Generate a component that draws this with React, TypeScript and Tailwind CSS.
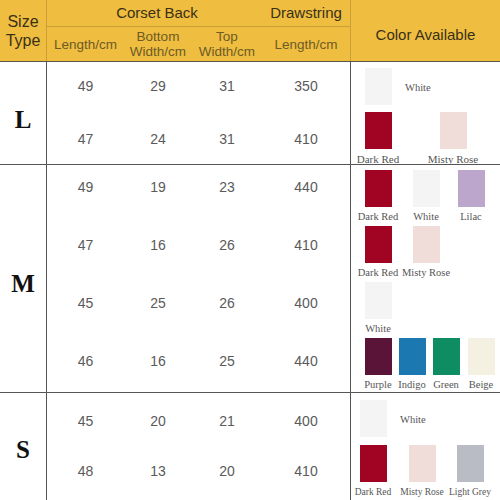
type Sw = { c: string; l: string; cls: string };

const DR = "#a00422";
const WH = "#f4f4f4";
const MR = "#f0dcd8";

function Swatch({ s, w, t = "text-[10.5px]" }: { s: Sw; w: string; t?: string }) {
  return (
    <div className={`flex flex-col items-center ${w} ${s.cls}`}>
      <div className="w-[27px] h-[37px]" style={{ backgroundColor: s.c }} />
      <span className={`mt-[4px] leading-[12px] text-[#555] whitespace-nowrap font-['Liberation_Serif',serif] ${t}`}>
        {s.l}
      </span>
    </div>
  );
}

function WhiteSide({ cls }: { cls: string }) {
  return (
    <div className="flex items-center">
      <div className={`w-[27px] h-[37px] bg-[#f4f4f4] ${cls}`} />
      <span className="ml-[13px] mt-[3px] text-[10.5px] leading-[12px] text-[#555] font-['Liberation_Serif',serif]">
        White
      </span>
    </div>
  );
}

function Values({ rows, cls }: { rows: string[][]; cls: string }) {
  return (
    <div className={`w-[304px] border-r border-[#555] flex flex-col ${cls}`}>
      {rows.map((r, i) => (
        <div key={i} className="flex h-[16px] items-center text-[14px] leading-[16px] text-[#5a5a5a]">
          <span className="w-[77px] text-center">{r[0]}</span>
          <span className="w-[68px] text-center">{r[1]}</span>
          <span className="w-[70px] text-center">{r[2]}</span>
          <span className="w-[88px] text-center">{r[3]}</span>
        </div>
      ))}
    </div>
  );
}

function Letter({ t, cls }: { t: string; cls: string }) {
  return (
    <div className={`w-[47px] border-r border-[#555] flex justify-center items-center font-['Liberation_Serif',serif] font-bold text-[25px] text-[#111] ${cls}`}>
      {t}
    </div>
  );
}

export default function App() {
  return (
    <div className="w-[500px] h-[500px] bg-white overflow-hidden font-['Liberation_Sans',Arial,sans-serif]">
      {/* header */}
      <div className="flex h-[62px] bg-[#efbe40] border-b border-[#5a5548]">
        <div className="w-[47px] border-r border-[#c99f36] flex flex-col items-center justify-center pt-[1px] text-[16px] leading-[19px] text-[#3a3018]">
          <span>Size</span>
          <span>Type</span>
        </div>
        <div className="w-[304px] border-r border-[#c99f36] flex flex-col">
          <div className="h-[27px] flex items-center border-b border-[#c99f36] text-[15px] text-[#3a3018]">
            <span className="w-[215px] pl-[5px] text-center">Corset Back</span>
            <span className="w-[88px] text-center">Drawstring</span>
          </div>
          <div className="flex-1 flex items-center text-[13.5px] leading-[15px] text-[#6e5a26]">
            <span className="w-[77px] text-center">Length/cm</span>
            <span className="w-[68px] text-center">Bottom<br />Width/cm</span>
            <span className="w-[70px] text-center">Top<br />Width/cm</span>
            <span className="w-[88px] text-center">Length/cm</span>
          </div>
        </div>
        <div className="flex-1 flex items-center justify-center pt-[9px] text-[15px] text-[#3a3018]">
          Color Available
        </div>
      </div>

      {/* L */}
      <div className="flex h-[103px] border-b border-[#555]">
        <Letter t="L" cls="pt-[14px]" />
        <Values cls="pt-[16px] gap-[37px]" rows={[["49", "29", "31", "350"], ["47", "24", "31", "410"]]} />
        <div className="flex-1 flex flex-col pt-[6px] gap-[7px]">
          <WhiteSide cls="ml-[14px]" />
          <div className="flex">
            <Swatch w="w-[44px]" t="text-[11px]" s={{ c: DR, l: "Dark Red", cls: "ml-[5px]" }} />
            <Swatch w="w-[44px]" t="text-[11px]" s={{ c: MR, l: "Misty Rose", cls: "ml-[31px]" }} />
          </div>
        </div>
      </div>

      {/* M */}
      <div className="flex h-[228px] border-b border-[#555]">
        <Letter t="M" cls="pt-[10px]" />
        <Values cls="pt-[14px] gap-[42px]" rows={[["49", "19", "23", "440"], ["47", "16", "26", "410"], ["45", "25", "26", "400"], ["46", "16", "25", "440"]]} />
        <div className="flex-1 flex flex-col pt-[5px] gap-[3px]">
          <div className="flex">
            <Swatch w="w-[44px]" s={{ c: DR, l: "Dark Red", cls: "ml-[5px]" }} />
            <Swatch w="w-[44px]" s={{ c: WH, l: "White", cls: "ml-[4px]" }} />
            <Swatch w="w-[44px]" s={{ c: "#bca6cc", l: "Lilac", cls: "ml-[1px]" }} />
          </div>
          <div className="flex">
            <Swatch w="w-[44px]" s={{ c: DR, l: "Dark Red", cls: "ml-[5px]" }} />
            <Swatch w="w-[44px]" s={{ c: MR, l: "Misty Rose", cls: "ml-[4px]" }} />
          </div>
          <div className="flex">
            <Swatch w="w-[44px]" s={{ c: WH, l: "White", cls: "ml-[5px]" }} />
          </div>
          <div className="flex">
            <Swatch w="w-[34px]" s={{ c: "#5a1438", l: "Purple", cls: "ml-[10px]" }} />
            <Swatch w="w-[34px]" s={{ c: "#1b78b0", l: "Indigo", cls: "ml-[0px]" }} />
            <Swatch w="w-[34px]" s={{ c: "#0e8c62", l: "Green", cls: "ml-[0px]" }} />
            <Swatch w="w-[34px]" s={{ c: "#f4f1e2", l: "Beige", cls: "ml-[1px]" }} />
          </div>
        </div>
      </div>

      {/* S */}
      <div className="flex h-[107px]">
        <Letter t="S" cls="pt-[6px]" />
        <Values cls="pt-[20px] gap-[34px]" rows={[["45", "20", "21", "400"], ["48", "13", "20", "410"]]} />
        <div className="flex-1 flex flex-col pt-[7px] gap-[8px]">
          <WhiteSide cls="ml-[9px]" />
          <div className="flex">
            <Swatch w="w-[44px]" t="text-[9.5px]" s={{ c: DR, l: "Dark Red", cls: "ml-[0px]" }} />
            <Swatch w="w-[44px]" t="text-[9.5px]" s={{ c: MR, l: "Misty Rose", cls: "ml-[5px]" }} />
            <Swatch w="w-[44px]" t="text-[9.5px]" s={{ c: "#b9bcc4", l: "Light Grey", cls: "ml-[4px]" }} />
          </div>
        </div>
      </div>
    </div>
  );
}
